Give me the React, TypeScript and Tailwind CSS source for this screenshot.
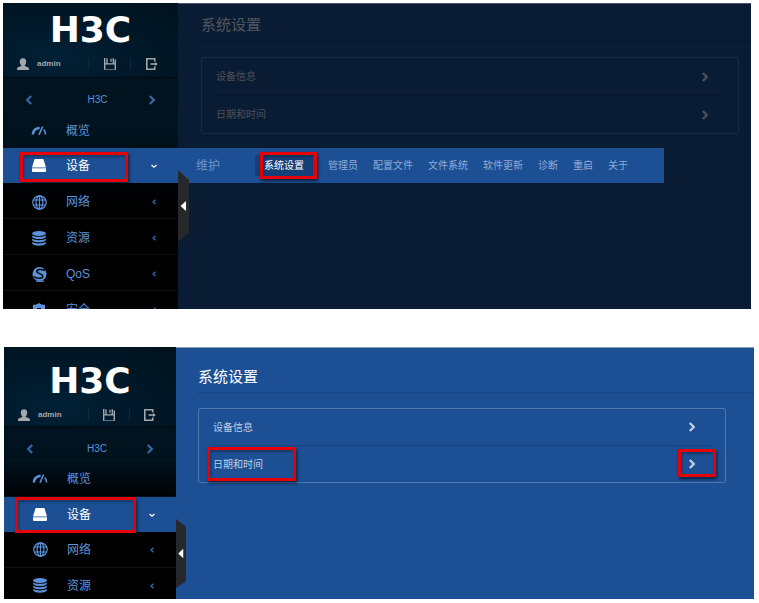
import clsx from "clsx";
import type { ReactNode } from "react";

const MENU = [
    { name: '概览', icon: <GaugeIcon /> },
    { name: '设备', icon: <DriveIcon /> },
    { name: '网络', icon: <GlobeIcon /> },
    { name: '资源', icon: <StackIcon /> },
    { name: 'QoS', icon: <QosIcon /> },
    { name: '安全', icon: <ShieldIcon /> },
]

const TABS = ['系统设置', '管理员', '配置文件', '文件系统', '软件更新', '诊断', '重启', '关于']

function GaugeIcon() {
    return (
        <svg width="16" height="12" viewBox="0 0 16 12" fill="none" stroke="currentColor">
            <path d="M1.8 9.5C2 6 4.2 3.4 8.6 2.8" strokeWidth="2.5" />
            <path d="M8 9.8L11.6 1.5" strokeWidth="1.6" />
            <path d="M12.8 4.5C14 6 14.5 7.500 14.6 9.500" strokeWidth="1.6" />
        </svg>
    )
}

function DriveIcon() {
    return (
        <svg width="14" height="13" viewBox="0 0 14 13" fill="currentColor">
            <path d="M2.600 0h8.800L14 8.500H0z" />
            <path d="M0 9.300h14V12a1 1 0 0 1-1 1H1a1 1 0 0 1-1-1z" />
        </svg>
    )
}

function GlobeIcon() {
    return (
        <svg width="15" height="15" viewBox="0 0 15 15" fill="none" stroke="currentColor" strokeWidth="1.200">
            <circle cx="7.500" cy="7.500" r="6.700" />
            <ellipse cx="7.500" cy="7.500" rx="3.400" ry="6.700" />
            <path d="M7.500.8v13.400M1.500 5h12M1.500 10h12" />
        </svg>
    )
}

function StackIcon() {
    return (
        <svg width="14" height="15" viewBox="0 0 14 15" fill="currentColor">
            <ellipse cx="7" cy="2.600" rx="6.800" ry="2.500" />
            <path d="M.2 4.200C2 6.400 12 6.400 13.800 4.200V6C12 8.700 2 8.700.2 6z" />
            <path d="M.2 7.500C2 9.700 12 9.700 13.800 7.500v1.800C12 12 2 12 .2 9.300z" />
            <path d="M.2 10.800c1.800 2.200 11.800 2.200 13.600 0v1.800c-1.800 3-11.800 3-13.600 0z" />
        </svg>
    )
}

function QosIcon() {
    return (
        <svg width="15" height="15" viewBox="0 0 15 15" fill="none">
            <circle cx="7.500" cy="7" r="7" fill="currentColor" />
            <path d="M13 3.500C10 1.800 4.800 2 4.800 4.400c0 2.500 6 2 6 4.800 0 2.600-5.500 2.900-9 .3" stroke="#000" strokeWidth="1.500" />
            <path d="M4 14.200h8" stroke="currentColor" strokeWidth="1.300" />
        </svg>
    )
}

function ShieldIcon() {
    return (
        <svg width="14" height="15" viewBox="0 0 14 15" fill="currentColor">
            <path fillRule="evenodd" d="M7 0c1.500 1.300 3.500 1.800 6 1.800V8c0 3.500-2.500 5.500-6 7-3.500-1.500-6-3.500-6-7V1.800C3.500 1.800 5.500 1.300 7 0zM5 5v1.500h4V5z" />
        </svg>
    )
}

function UserIcon() {
    return (
        <svg width="12" height="12" viewBox="0 0 12 12" fill="currentColor">
            <path d="M6 .300c2.300 0 3.300 1.500 3.200 3.600C9.100 5.500 8.500 6.500 7.800 7v1l3.200 1.200c.7.300 1 1 1 2.800H0c0-1.800.3-2.500 1-2.800L4.200 8V7C3.500 6.500 2.900 5.500 2.800 3.900 2.700 1.800 3.700.3 6 .3z" />
        </svg>
    )
}

function SaveIcon() {
    return (
        <svg width="12" height="12" viewBox="0 0 12 12" fill="none" stroke="currentColor">
            <path d="M.7 0v11.500M11.300 1.500v10" strokeWidth="1.400" />
            <path d="M3 .300v5M9.300.300v5M0 5.800h12" strokeWidth="1.300" />
            <path d="M7 .800v3" strokeWidth="1.300" />
            <path d="M0 11.500h12" strokeWidth=".6" />
        </svg>
    )
}

function ExitIcon() {
    return (
        <svg width="12" height="12" viewBox="0 0 12 12" fill="none" stroke="currentColor" strokeWidth="1.600">
            <path d="M8.700 3.500V.800H.800v10.400h7.900V8.500" />
            <path d="M4.500 6H10" />
            <path d="M9 4v4l2.800-2z" fill="currentColor" stroke="none" />
        </svg>
    )
}

function Chevron({ left }: { left?: boolean }) {
    return (
        <svg width="8" height="10" viewBox="0 0 8 10" fill="none" stroke="currentColor" strokeWidth="2.300">
            <path d={left ? 'M6.200 1L2.200 5l4 4' : 'M1.800 1l4 4-4 4'} />
        </svg>
    )
}

function Caret({ open }: { open: boolean }) {
    return (
        <svg width="6" height="6" viewBox="0 0 6 6" fill="none" stroke="currentColor" strokeWidth="1.300">
            <path d={open ? 'M.500 2L3 4.200 5.500 2' : 'M4.500.700L2 3l2.500 2.300'} />
        </svg>
    )
}

function Mark({ className }: { className: string }) {
    return (
        <span
            aria-hidden="true"
            className={clsx('absolute z-20 border-[3px] border-[#e60008] shadow-[1px_2px_3px_rgba(0,0,0,0.6),inset_1px_2px_3px_rgba(0,0,0,0.3)] pointer-events-none', className)}
        />
    )
}

type SidebarProps = {
    count: number
    className: string
    headClass: string
    itemClass?: string
    handleClass: string
    handlePoints: string
    markClass: string
}

function Sidebar({ count, className, headClass, itemClass, handleClass, handlePoints, markClass }: SidebarProps) {
    return (
        <aside className={clsx('relative z-10 shrink-0 bg-linear-to-b from-[#001420] via-[#00121d] via-45% to-black to-75%', className)}>
            <div className={clsx('border-b border-[#000a10] bg-radial-[at_30%_75%] from-[#012036] to-[#00111b]', headClass)}>
                <h1 className="h-[50px] flex items-center justify-center pt-1 font-['DejaVu_Sans'] font-bold text-[36px] leading-none text-white">
                    H3C
                </h1>
                <div className="grid grid-cols-[85fr_43fr_47fr] h-[22px] items-center text-[#a3a8ab]">
                    <div className="flex items-center gap-2 pl-[14px]">
                        <UserIcon />
                        <span className="text-[8px] font-bold">admin</span>
                    </div>
                    <button aria-label="保存" className="flex justify-center border-x border-[#12293a]">
                        <SaveIcon />
                    </button>
                    <button aria-label="退出" className="flex justify-center pr-[6px]">
                        <ExitIcon />
                    </button>
                </div>
            </div>

            <div className="flex h-[34px] items-center justify-between px-[22px] pt-[10px] border-b border-[#06151f] text-[#3565a8]">
                <button aria-label="上一个"><Chevron left /></button>
                <span className="pl-[14px] text-[10px] text-[#5b93db]">H3C</span>
                <button aria-label="下一个"><Chevron /></button>
            </div>

            <nav>
                {MENU.slice(0, count).map((item) => {
                    const active = item.name === '设备'
                    return (
                        <a
                            key={item.name}
                            href="#"
                            className={clsx(
                                'relative flex items-center gap-5 pl-[29px] pr-[21px] text-xs',
                                active ? 'h-[35px] bg-[#1c4f94] text-white' : 'h-9 border-b border-[#0a1219] text-[#5b93db]',
                                !active && itemClass
                            )}
                        >
                            <span className="flex w-[14px] justify-center [&>svg]:shrink-0">{item.icon}</span>
                            <span>{item.name}</span>
                            {item.name !== '概览' && (
                                <span className={clsx('ml-auto', !active && 'text-[#1f6fb5]')}>
                                    <Caret open={active} />
                                </span>
                            )}
                            {active && <Mark className={markClass} />}
                        </a>
                    )
                })}
            </nav>

            <button aria-label="收起" className={clsx('absolute left-full', handleClass)}>
                <svg className="h-full w-full" viewBox="0 0 11 72" preserveAspectRatio="none">
                    <polygon points={handlePoints} fill="#26292b" />
                    <polygon points="2.500,36 8,31 8,41" fill="#fff" />
                </svg>
            </button>
        </aside>
    )
}

type SettingsProps = {
    className: string
    titleClass: string
    lineClass: string
    listClass: string
    rowClass: string
    marked?: boolean
    children?: ReactNode
}

function Settings({ className, titleClass, lineClass, listClass, rowClass, marked, children }: SettingsProps) {
    return (
        <main className={clsx('relative min-w-0 flex-1', className)}>
            <h2 className={clsx('flex items-center border-b text-[15px]', titleClass, lineClass)}>系统设置</h2>
            <ul className={clsx('mt-[15px] rounded-xs border px-[14px] text-[10px]', listClass)}>
                <li className={clsx('border-b', lineClass)}>
                    <a href="#" className={clsx('flex items-center justify-between pr-[15px]', rowClass)}>
                        设备信息
                        <Chevron />
                    </a>
                </li>
                <li>
                    <a href="#" className={clsx('relative flex items-center justify-between pr-[15px]', rowClass)}>
                        日期和时间
                        <Chevron />
                        {marked && <Mark className="-left-[6px] top-px h-[34px] w-[89px]" />}
                        {marked && <Mark className="-right-[5px] top-[3px] h-7 w-[38px]" />}
                    </a>
                </li>
            </ul>
            {children}
        </main>
    )
}

export default function App() {
    return (
        <div className="flex flex-col gap-[38px] bg-white pt-[3px] pb-1 font-['Liberation_Sans','Noto_Sans_CJK_SC',sans-serif]">
            <section className="relative ml-[3px] mr-2 flex h-[306px] overflow-hidden">
                <Sidebar
                    count={6}
                    className="w-[175px]"
                    headClass="pb-[2px]"
                    itemClass="pt-[3px]"
                    handleClass="top-[167px] h-[72px] w-[11px]"
                    handlePoints="0,0 11,10 11,63 0,72"
                    markClass="left-[17px] top-[4px] h-[30px] w-[108px]"
                />
                <Settings
                    className="bg-[#0a1c34] border-t border-t-[#46566b] pl-[23px]"
                    titleClass="h-[38px] pt-[6px] text-[#53575d]"
                    lineClass="border-[#07162b]"
                    listClass="mr-3 border-[#1b2a40] text-[#4a5059]"
                    rowClass="h-[37px]"
                >
                    <nav className="absolute left-0 top-[144px] flex h-[35px] items-center gap-[15px] whitespace-nowrap bg-[#1c4f94] pl-[18px] pr-9 text-[10px] text-[#8fadd8]">
                        <span className="mr-5 text-xs text-[#7094c8]">维护</span>
                        {TABS.map((tab, i) => (
                            <a
                                key={tab}
                                href="#"
                                className={clsx('relative flex h-[21px] items-center', i === 0 && 'bg-[#163f78] px-[9px] text-white')}
                            >
                                {tab}
                                {i === 0 && <Mark className="left-[5px] -right-1 -top-[3px] h-[27px]" />}
                            </a>
                        ))}
                    </nav>
                </Settings>
            </section>

            <section className="relative ml-1 mr-[5px] flex h-[252px] overflow-hidden">
                <Sidebar
                    count={4}
                    className="w-[172px]"
                    headClass="pt-[7px]"
                    handleClass="top-[172px] h-[69px] w-[10px]"
                    handlePoints="0,0 11,8 11,65 0,72"
                    markClass="left-[11px] top-0 h-[36px] w-[121px]"
                />
                <Settings
                    className="bg-[#1c4f94] border-t border-t-[#8b9cab] pl-[22px]"
                    titleClass="h-[45px] pt-[14px] text-white"
                    lineClass="border-[#174480]"
                    listClass="mr-7 border-[#5179b1] text-[#c0cfe5]"
                    rowClass="h-9"
                    marked
                />
            </section>
        </div>
    )
}
